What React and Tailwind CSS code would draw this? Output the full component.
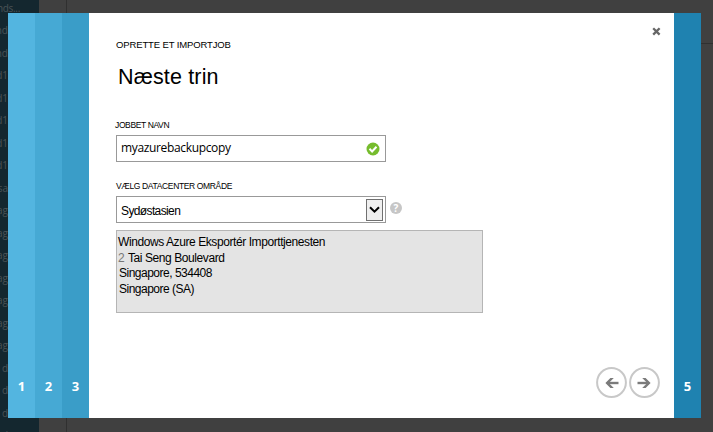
const rows = ['nds...', 'nd', 'nd', 'd1', 'd1', 'd1', 'd1', 'd1', 'sa', 'ag', 'ag', 'ag', 'ag', 'ag', 'ag', 'ag', 'd', 'd', 'd', 'd'];

function Backdrop() {
  return (
    <div className="flex h-full w-full bg-[#404040]">
      <div className="w-[39px] shrink-0 overflow-hidden bg-[#14272f] font-['Open_Sans',sans-serif] text-[10px] text-[#4b5356]">
        <div className="-mt-[3px]">
          {rows.map((r, i) => (
            <div key={i} className={`flex h-[22.5px] items-center whitespace-nowrap ${i === 0 ? 'w-[20px] tracking-[-0.3px]' : 'w-[8px]'} justify-end`}>
              {r}
            </div>
          ))}
        </div>
      </div>
      <div className="h-full w-[28px] shrink-0 border-r border-[#303030]" />
      <div className="flex-1 pt-[43px]">
        <div className="h-px bg-[#303030]" />
      </div>
    </div>
  );
}

function Step({ n, className }) {
  return (
    <div className={`flex w-[27px] shrink-0 items-end justify-center pb-[22px] font-['Open_Sans',sans-serif] text-[13px] leading-[20px] font-bold text-white ${className}`}>
      {n}
    </div>
  );
}

function ArrowButton({ flip }) {
  return (
    <button className="size-[31px]" aria-label={flip ? 'Tilbage' : 'Frem'}>
      <svg viewBox="0 0 31 31" className={flip ? 'size-[31px] -scale-x-100' : 'size-[31px]'} fill="none">
        <circle cx="15.5" cy="15.5" r="14.4" stroke="#c8c8c8" strokeWidth="2" />
        <path d="M8.5 16H20" stroke="#7b7b7b" strokeWidth="2.4" />
        <path d="M13.2 11H16.6L21.6 16L16.6 21H13.2L18.2 16Z" fill="#7b7b7b" />
      </svg>
    </button>
  );
}

export default function App() {
  return (
    <div className="relative h-[432px] w-[713px] overflow-hidden font-['Liberation_Sans',Arial,sans-serif] text-black">
      <Backdrop />
      <div className="absolute top-[13px] left-[8px] flex h-[405px] w-[693px] bg-white">
        <Step n="1" className="bg-[#53b5e0]" />
        <Step n="2" className="bg-[#46a9d4]" />
        <Step n="3" className="bg-[#3a9dc8]" />
        <main className="flex flex-1 flex-col pr-[13px] pl-[27px]">
          <header className="flex h-[38px] justify-between">
            <p className="pt-[26px] text-[9.5px] leading-[12px] tracking-[-0.13px] whitespace-nowrap">OPRETTE ET IMPORTJOB</p>
            <button className="mt-[14px] size-[9px]" aria-label="Luk">
              <svg viewBox="0 0 9 9" className="size-[9px]">
                <path d="M1.2 1.2L7.6 7.6M7.6 1.2L1.2 7.6" stroke="#666" strokeWidth="2.3" />
              </svg>
            </button>
          </header>
          <h1 className="mt-[13px] pl-[2px] text-[21.5px] leading-[26px] tracking-[0.15px]">Næste trin</h1>
          <label className="mt-[29px] -ml-px text-[8.5px] leading-[12px] tracking-[-0.37px]">JOBBET NAVN</label>
          <div className="mt-[4px] flex h-[27px] w-[270px] items-center justify-between border border-[#999] pr-[5px] pl-[4px]">
            <span className="-mt-[2px] font-['Open_Sans',sans-serif] text-[12px] leading-[16px] tracking-[-0.35px]">myazurebackupcopy</span>
            <svg viewBox="0 0 14 14" className="size-[14px]" fill="none">
              <circle cx="7" cy="7" r="6.5" fill="#76bc2d" />
              <path d="M3.5 6.8L6.1 9.5L10.5 4.7" stroke="white" strokeWidth="2" />
            </svg>
          </div>
          <label className="mt-[18px] text-[8.5px] leading-[12px] tracking-[-0.36px]">VÆLG DATACENTER OMRÅDE</label>
          <div className="mt-[4px] flex items-center gap-[4px]">
            <div className="flex h-[27px] w-[270px] items-center justify-between border border-[#999] pr-[2px] pl-[4px]">
              <span className="pt-[3px] text-[12px] leading-[16px] tracking-[-0.62px]">Sydøstasien</span>
              <span className="flex h-[22px] w-[17px] items-center justify-center border border-[#707070] bg-[#efefef]">
                <svg viewBox="0 0 11 8" className="h-[8px] w-[11px]" fill="none">
                  <path d="M1 1.2L5.5 5.7L10 1.2" stroke="black" strokeWidth="2" />
                </svg>
              </span>
            </div>
            <span className="mb-[3px] flex size-[12px] items-center justify-center rounded-full bg-[#c6c6c6] font-['Open_Sans',sans-serif] text-[10px] leading-[12px] font-bold text-white">?</span>
          </div>
          <div className="mt-[7px] h-[83px] w-[367px] border border-[#b5b5b5] bg-[#e4e4e4] pt-[4px] pl-[2px] text-[12px] leading-[15.7px] tracking-[-0.5px] whitespace-nowrap">
            <p className="-ml-px tracking-[-0.42px]">Windows Azure Eksportér Importtjenesten</p>
            <p className="tracking-[-0.42px]"><span className="mr-px -ml-px text-[#777]">2</span> Tai Seng Boulevard</p>
            <p>Singapore, 534408</p>
            <p>Singapore (SA)</p>
          </div>
          <nav className="mt-auto mr-px mb-[20px] flex justify-end gap-[2px]">
            <ArrowButton flip />
            <ArrowButton />
          </nav>
        </main>
        <Step n="5" className="bg-[#1f82b0]" />
      </div>
    </div>
  );
}
